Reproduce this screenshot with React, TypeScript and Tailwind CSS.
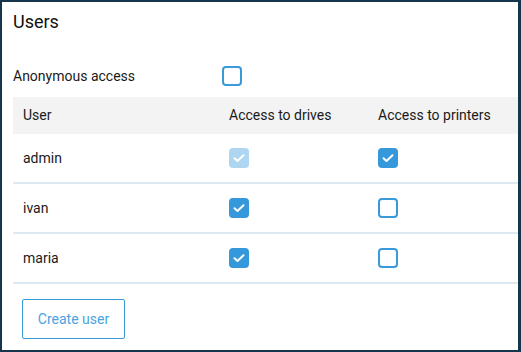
import React from "react";

const USERS = [
  { name: "admin", drives: true, drivesDisabled: true, printers: true },
  { name: "ivan", drives: true, drivesDisabled: false, printers: false },
  { name: "maria", drives: true, drivesDisabled: false, printers: false },
];

function Box({ checked, disabled }: { checked: boolean; disabled?: boolean }) {
  if (!checked) {
    return (
      <span className="block h-5 w-5 rounded-[4px] border-2 border-[#3a9ad9] bg-white" />
    );
  }
  return (
    <span
      className={
        disabled
          ? "flex h-5 w-5 items-center justify-center rounded-[4px] bg-[#aed6f1]"
          : "flex h-5 w-5 items-center justify-center rounded-[4px] bg-[#3498db]"
      }
    >
      <svg viewBox="0 0 20 20" className="h-5 w-5" fill="none">
        <path
          d="M5.5 10.2l3 2.8 6-5.8"
          stroke="white"
          strokeWidth="2"
          strokeLinecap="round"
          strokeLinejoin="round"
        />
      </svg>
    </span>
  );
}

export default function App() {
  return (
    <div
      className="h-[352px] w-[521px] overflow-hidden border-t-2 border-b-2 border-l-2 border-r-[3px] border-[#15364c] bg-white text-[14px] text-[#1a1a1a]"
      style={{ fontFamily: "Roboto, 'Liberation Sans', sans-serif" }}
    >
      <div className="pl-[11px] pt-[9px]">
        {/* titulo */}
        <h1 className="text-[18px] leading-[22px] text-[#111]">Users</h1>

        {/* acesso anonimo */}
        <div className="mt-[31px] flex h-[24px] items-center">
          <span className="w-[209px]">Anonymous access</span>
          <Box checked={false} />
        </div>

        {/* tabela */}
        <div className="mt-[9px]">
          <div className="flex h-[37px] items-center bg-[#f3f3f3] pb-px">
            <div className="w-[206px] pl-[10px]">User</div>
            <div className="w-[149px] pl-[10px]">Access to drives</div>
            <div className="pl-[10px]">Access to printers</div>
          </div>
          {USERS.map((u) => (
            <div
              key={u.name}
              className="flex h-[50px] items-center border-b-2 border-[#dde9f0]"
            >
              <div className="w-[206px] pl-[10px]">{u.name}</div>
              <div className="w-[149px] pl-[10px]">
                <Box checked={u.drives} disabled={u.drivesDisabled} />
              </div>
              <div className="pl-[10px]">
                <Box checked={u.printers} />
              </div>
            </div>
          ))}
        </div>

        <button className="mt-[15px] ml-[9px] h-[40px] w-[103px] rounded-[2px] border border-[#3a9ad9] text-[14px] text-[#4aa3df]">
          Create user
        </button>
      </div>
    </div>
  );
}
